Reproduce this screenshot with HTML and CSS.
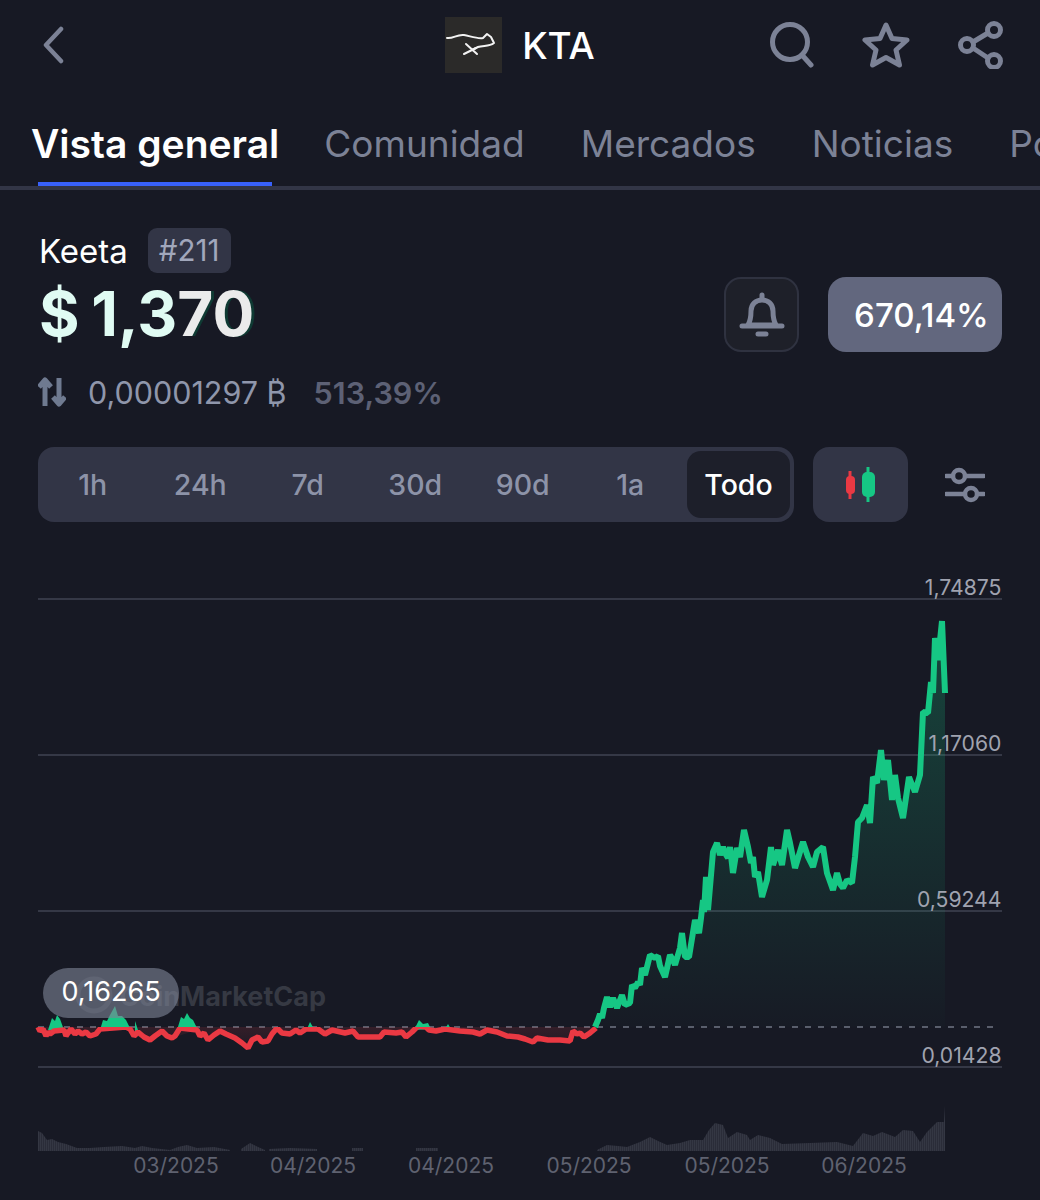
FILE: index.html
```html
<!DOCTYPE html>
<html lang="es">
  <head>
    <meta charset="utf-8">
    <title>KTA</title>
    <link rel="stylesheet" href="styles.css">
  </head>
  <body>
    <header class="topBar">
      <svg class="backIcon" width="26" height="38" viewBox="0 0 26 38"><path d="M21 3 L6 19 L21 35"/></svg>
      <div class="coinTitle">
        <svg class="coinLogo" width="57" height="56" viewBox="0 0 57 56">
          <path d="M2 21 C8 22 12 17 19 18 C25 19 32 22 38 21 L42 17 L46 20 L49 26 C44 30 38 28 33 30 L27 33"/>
          <path d="M21 27 L32 37 M19 37 L31 31"/>
        </svg>
        <span>KTA</span>
      </div>
      <div class="topIcons">
        <svg width="44" height="46" viewBox="0 0 44 46"><circle cx="20" cy="20" r="17.5"/><path d="M32 33 L41 43"/></svg>
        <svg width="48" height="48" viewBox="0 0 48 48"><path d="M24 4 L30 17.5 L45 19 L34 29 L37.500 44 L24 36.500 L10.500 44 L14 29 L3 19 L18 17.500 Z"/></svg>
        <svg width="46" height="48" viewBox="0 0 46 48"><circle cx="36" cy="9" r="6.500"/><circle cx="9" cy="24" r="6.500"/><circle cx="36" cy="40" r="6.500"/><path d="M30 12 L15 21 M15 27 L30 37"/></svg>
      </div>
    </header>

    <nav class="tabs">
      <a class="tab active">Vista general</a>
      <a class="tab">Comunidad</a>
      <a class="tab">Mercados</a>
      <a class="tab">Noticias</a>
      <a class="tab">Portfolio</a>
    </nav>

    <section class="priceBlock">
      <div class="priceLeft">
        <div class="nameRow">
          <span class="coinName">Keeta</span>
          <span class="rank">#211</span>
        </div>
        <div class="price">$ 1,3<span class="priceGhost">70</span></div>
      </div>
      <div class="priceRight">
        <button class="bellBtn">
          <svg width="46" height="46" viewBox="0 0 46 46">
            <path d="M23 3 V7 M9 33 C12 28 12 24 12 19 C12 12 17 8 23 8 C29 8 34 12 34 19 C34 24 34 28 37 33 Z"/>
            <path d="M3 34 H43 M19 42 H27"/>
          </svg>
        </button>
        <button class="changeBtn">670,14%</button>
      </div>
    </section>

    <div class="btcRow">
      <svg width="28" height="30" viewBox="0 0 28 30"><path d="M7 29 V6 M1 10 L7 3 L13 10 M21 1 V24 M15 20 L21 27 L27 20"/></svg>
      <span class="btcValue">0,00001297 ₿</span>
      <span class="btcChange">513,39%</span>
    </div>

    <div class="controls">
      <div class="ranges">
        <span>1h</span>
        <span>24h</span>
        <span>7d</span>
        <span>30d</span>
        <span>90d</span>
        <span>1a</span>
        <span class="current">Todo</span>
      </div>
      <button class="candleBtn">
        <svg width="32" height="36" viewBox="0 0 32 36">
          <path class="redCandle" d="M5 4 V32"/><rect class="redCandle" x="1" y="9" width="9" height="18" rx="4"/>
          <path class="greenCandle" d="M23 0 V35"/><rect class="greenCandle" x="17" y="5" width="13" height="25" rx="5"/>
        </svg>
      </button>
      <svg class="filterIcon" width="40" height="36" viewBox="0 0 40 36">
        <circle cx="14" cy="9" r="6"/><circle cx="26" cy="27" r="6"/>
        <path d="M1 9 H6 M22 9 H39 M1 27 H18 M34 27 H39"/>
      </svg>
    </div>

    <svg class="chart" width="1040" height="630" viewBox="0 570 1040 630">
      <defs>
        <linearGradient id="greenFade" gradientUnits="userSpaceOnUse" x1="0" y1="650" x2="0" y2="1027">
          <stop offset="0" stop-color="#16c784" stop-opacity=".24"/>
          <stop offset="1" stop-color="#16c784" stop-opacity=".01"/>
        </linearGradient>
        <linearGradient id="redFade" gradientUnits="userSpaceOnUse" x1="0" y1="1027" x2="0" y2="1048">
          <stop offset="0" stop-color="#ea3943" stop-opacity=".14"/>
          <stop offset="1" stop-color="#ea3943" stop-opacity=".03"/>
        </linearGradient>
        <pattern id="volBars" width="2" height="4" patternUnits="userSpaceOnUse">
          <rect width="2" height="4" fill="#2a2c38"/>
          <rect width="1" height="4" fill="#343743"/>
        </pattern>
        <clipPath id="belowBase"><rect x="0" y="1027" width="1040" height="100"/></clipPath>
      </defs>

      <g class="gridLines">
        <path d="M38 599 H1002 M38 755 H1002 M38 911 H1002 M38 1067 H1002"/>
      </g>
      <path class="baseLine" d="M38 1027 H994"/>

      <g class="watermark">
        <circle cx="94" cy="995" r="16"/>
        <text x="326" y="1006">CoinMarketCap</text>
      </g>

      <path class="volume" d="M38 1151 V1131 L42 1133 L47 1140 L52 1139 L58 1142 L66 1144 L77 1148 L90 1148 L104 1147 L122 1146 L135 1148 L142 1146 L152 1148 L170 1150 L178 1147 L187 1145 L197 1148 L214 1147 L230 1150 V1151 Z M241 1151 V1149 L250 1143 L258 1147 L265 1150 V1151 Z M269 1151 V1149 L290 1148 L317 1149 V1151 Z M352 1151 V1148 H363 V1151 Z M416 1151 V1148 H438 V1151 Z M597 1151 V1150 L607 1145 L618 1146 L627 1147 L640 1142 L650 1137 L658 1141 L667 1145 L680 1143 L690 1140 L703 1140 L709 1130 L715 1123 L723 1125 L728 1138 L737 1132 L747 1135 L750 1140 L758 1135 L770 1138 L782 1144 L810 1143 L837 1142 L853 1146 L863 1133 L873 1136 L882 1132 L895 1137 L903 1130 L913 1131 L920 1142 L927 1132 L937 1122 L944 1122 L945 1106 V1151 Z"/>

      <path class="areaGreen" d="M595 1027 L600 1014 L604 1008 L607 997 L610 1007 L613 998 L617 1008 L622 995 L625 1005 L630 1003 L632 985 L638 982 L642 968 L645 975 L650 955 L655 958 L660 966 L665 977 L670 955 L675 965 L682 933 L685 957 L689 957 L695 920 L699 933 L703 900 L706 877 L708 910 L713 852 L717 843 L720 855 L723 847 L728 858 L730 847 L733 873 L737 848 L740 857 L744 830 L748 847 L751 863 L753 857 L755 877 L758 872 L762 897 L767 880 L771 847 L773 865 L778 850 L782 865 L787 830 L790 843 L795 868 L803 842 L808 857 L813 867 L817 852 L823 847 L827 873 L833 890 L837 873 L843 888 L847 880 L852 883 L855 857 L858 822 L862 818 L867 805 L870 823 L873 777 L877 783 L881 750 L884 780 L888 760 L892 800 L895 775 L898 798 L903 818 L909 777 L915 792 L920 775 L923 712 L928 713 L931 682 L933 693 L935 638 L938 660 L942 621 L945 693 V1027 Z"/>
      <path class="areaRed" clip-path="url(#belowBase)" d="M38 1027 L42 1030 L46 1036 L50 1031 L64 1030 L68 1036 L74 1030 L82 1034 L92 1035 L100 1030 L130 1028 L134 1036 L150 1040 L162 1033 L175 1037 L197 1030 L210 1040 L222 1034 L235 1038 L248 1048 L258 1040 L266 1043 L277 1028 L290 1033 L306 1029 L330 1033 L353 1032 L360 1037 L380 1037 L385 1032 L404 1034 L407 1037 L415 1030 L440 1028 L473 1032 L487 1028 L507 1036 L533 1042 L540 1038 L570 1041 L573 1031 L583 1036 L595 1028 L595 1027 Z"/>

      <path class="humps" d="M48 1030 L52 1018 L55 1021 L57 1015 L60 1019 L64 1030 Z M100 1030 L103 1020 L107 1021 L110 1015 L115 1006 L118 1016 L122 1016 L126 1020 L131 1030 Z M177 1030 L181 1017 L184 1019 L187 1013 L190 1018 L193 1020 L198 1030 Z M135 1032 L135 1021 L138 1030 Z M307 1029 L310 1022 L314 1029 Z M414 1030 L419 1020 L423 1024 L428 1023 L431 1029 Z M445 1029 L448 1024 L451 1029 Z"/>

      <path class="priceLine lineGreen" d="M595 1027 L598 1020 L600 1014 L602 1018 L604 1008 L607 997 L610 1007 L613 998 L617 1008 L620 1000 L622 995 L625 1005 L630 1003 L632 985 L635 988 L638 982 L640 985 L642 968 L645 975 L650 955 L655 958 L658 956 L660 966 L665 977 L670 955 L673 960 L675 965 L680 948 L682 933 L685 957 L689 957 L695 920 L699 933 L701 918 L703 900 L704 912 L706 877 L708 910 L713 852 L717 843 L720 855 L723 847 L725 853 L728 858 L730 847 L733 873 L737 848 L740 857 L744 830 L748 847 L751 863 L753 857 L755 877 L758 872 L762 897 L767 880 L771 847 L773 865 L778 850 L782 865 L787 830 L790 843 L795 868 L803 842 L808 857 L813 867 L817 852 L823 847 L827 873 L833 890 L837 873 L840 884 L843 888 L847 880 L852 883 L855 857 L858 822 L862 818 L867 805 L870 823 L873 777 L877 783 L881 750 L884 780 L888 760 L892 800 L895 775 L898 798 L903 818 L909 777 L915 792 L920 775 L923 712 L928 713 L931 682 L933 693 L935 638 L938 660 L942 621 L945 693"/>
      <path class="priceLine lineRed" clip-path="url(#belowBase)" d="M38 1027 L40 1031 L43 1029 L46 1036 L48 1032 L50 1034 L54 1031 L64 1030 L66 1036 L68 1033 L71 1029 L75 1034 L78 1031 L82 1034 L86 1032 L90 1036 L96 1034 L100 1029 L126 1027 L130 1029 L134 1036 L138 1032 L144 1037 L150 1040 L155 1036 L162 1031 L167 1036 L172 1038 L175 1036 L180 1028 L197 1030 L200 1036 L204 1033 L208 1040 L214 1035 L220 1031 L226 1034 L235 1038 L242 1043 L248 1048 L252 1040 L258 1037 L262 1042 L268 1041 L272 1034 L277 1028 L282 1033 L290 1034 L296 1030 L300 1033 L306 1029 L318 1029 L325 1034 L332 1030 L345 1033 L353 1031 L358 1037 L380 1037 L384 1032 L396 1033 L402 1032 L406 1037 L412 1032 L418 1026 L426 1027 L429 1030 L436 1031 L445 1029 L460 1031 L473 1032 L480 1034 L487 1030 L497 1032 L507 1036 L518 1037 L525 1039 L533 1042 L537 1038 L548 1040 L560 1040 L570 1041 L573 1031 L577 1034 L580 1033 L584 1037 L590 1033 L596 1028"/>

      <g class="axisValues">
        <text x="1001.500" y="595">1,74875</text>
        <text x="1001.500" y="751">1,17060</text>
        <text x="1001.500" y="907">0,59244</text>
        <text x="1001.500" y="1063">0,01428</text>
      </g>
      <g class="axisDates">
        <text x="176" y="1173">03/2025</text>
        <text x="313" y="1173">04/2025</text>
        <text x="451" y="1173">04/2025</text>
        <text x="589" y="1173">05/2025</text>
        <text x="727" y="1173">05/2025</text>
        <text x="864" y="1173">06/2025</text>
      </g>

      <rect class="pricePill" x="43" y="968" width="136" height="50" rx="25"/>
      <text class="pillText" x="111" y="1001">0,16265</text>
    </svg>
  </body>
</html>
```

FILE: styles.css
```css
html {
  font-family: Inter, "Liberation Sans", sans-serif;
}

body {
  width: 1040px;
  height: 1200px;
  margin: 0;
  overflow: hidden;
  background-color: #171924;
  color: #fff;
}

button {
  font-family: inherit;
  padding: 0;
}

svg {
  display: block;
}

/* top bar */
.topBar {
  display: grid;
  grid-template-columns: 1fr auto 1fr;
  align-items: center;
  height: 90px;
  padding: 0 36px;
}

.backIcon {
  margin-left: 4px;
}

.backIcon path {
  fill: none;
  stroke: #7c8296;
  stroke-width: 4.5;
  stroke-linecap: round;
  stroke-linejoin: round;
}

.coinTitle {
  display: flex;
  align-items: center;
  gap: 20px;
  font-size: 37px;
  font-weight: 500;
}

.coinLogo {
  background-color: #2b2a29;
}

.coinLogo path {
  fill: none;
  stroke: #f2f2f2;
  stroke-width: 2;
  stroke-linecap: round;
  stroke-linejoin: round;
}

.topIcons {
  display: flex;
  justify-content: flex-end;
  align-items: center;
  gap: 48px;
}

.topIcons svg * {
  fill: none;
  stroke: #7c8296;
  stroke-width: 5;
  stroke-linecap: round;
  stroke-linejoin: round;
}

/* tabs */
.tabs {
  display: flex;
  gap: 56px;
  height: 100px;
  padding-left: 31px;
  border-bottom: 4px solid #323546;
  box-sizing: border-box;
  overflow: hidden;
  white-space: nowrap;
  font-size: 37px;
  line-height: 108px;
  color: #7c8296;
}

.tab {
  position: relative;
}

.tab.active {
  margin-right: -11px;
  font-size: 39px;
  font-weight: 600;
  color: #fff;
}

.tab.active::after {
  content: "";
  position: absolute;
  left: 7px;
  right: 7px;
  bottom: 0;
  height: 4px;
  background-color: #3861fb;
}

/* price */
.priceBlock {
  display: flex;
  justify-content: space-between;
  align-items: flex-end;
  padding: 38px 38px 0 39px;
}

.nameRow {
  display: flex;
  align-items: center;
  gap: 20px;
}

.coinName {
  font-size: 33px;
  font-weight: 400;
}

.rank {
  padding: 0 11px;
  height: 45px;
  line-height: 45px;
  border-radius: 9px;
  background-color: #323546;
  color: #a1a7bb;
  font-size: 29.500px;
}

.price {
  margin-top: 4px;
  height: 74px;
  font-size: 62px;
  line-height: 74px;
  font-weight: 700;
  word-spacing: -3px;
  color: #e0fbf3;
}

.priceGhost {
  color: #ebebeb;
  text-shadow: 3px 0 0 #0f3a33;
}

.priceRight {
  display: flex;
  gap: 29px;
  margin-bottom: -1px;
}

.bellBtn {
  display: flex;
  align-items: center;
  justify-content: center;
  width: 75px;
  height: 75px;
  border: 2px solid #2f3240;
  border-radius: 17px;
  background-color: #1e2029;
}

.bellBtn svg * {
  fill: none;
  stroke: #7c8296;
  stroke-width: 5;
  stroke-linecap: round;
  stroke-linejoin: round;
}

.changeBtn {
  width: 174px;
  height: 75px;
  padding-left: 13px;
  border: 0;
  border-radius: 18px;
  background-color: #62677e;
  color: #fff;
  font-size: 33px;
  font-weight: 500;
}

.btcRow {
  display: flex;
  align-items: center;
  height: 40px;
  margin-top: 21px;
  padding-left: 38px;
  font-size: 30.500px;
}

.btcRow svg {
  margin-right: 22px;
}

.btcRow path {
  fill: none;
  stroke: #6f7a90;
  stroke-width: 5;
  stroke-linejoin: round;
}

.btcValue {
  color: #8f96ab;
}

.btcChange {
  margin-left: 27px;
  color: #5d6175;
  font-weight: 600;
}

/* range buttons */
.controls {
  display: flex;
  align-items: center;
  margin-top: 35px;
  padding-left: 38px;
}

.ranges {
  display: grid;
  grid-template-columns: repeat(6, 107.500px) 106px;
  width: 756px;
  height: 75px;
  padding: 4px 4px 4px 1px;
  box-sizing: border-box;
  border-radius: 16px;
  background-color: #323546;
  font-size: 28.500px;
  font-weight: 500;
  color: #8d93a8;
}

.ranges span {
  display: flex;
  align-items: center;
  justify-content: center;
}

.ranges .current {
  margin-left: 3px;
  border-radius: 14px;
  background-color: #1d1f2a;
  color: #fff;
}

.candleBtn {
  display: flex;
  align-items: center;
  justify-content: center;
  width: 95px;
  height: 75px;
  margin-left: 19px;
  border: 0;
  border-radius: 16px;
  background-color: #323546;
}

.redCandle {
  fill: #ea3943;
  stroke: #ea3943;
  stroke-width: 3;
}

.greenCandle {
  fill: #16c784;
  stroke: #16c784;
  stroke-width: 3;
}

.redCandle[x],
.greenCandle[x] {
  stroke: none;
}

.filterIcon {
  margin-left: 37px;
}

.filterIcon * {
  fill: none;
  stroke: #7c8296;
  stroke-width: 4.500;
  stroke-linecap: round;
}

/* chart */
.chart {
  margin-top: 48px;
}

.gridLines path {
  fill: none;
  stroke: #353846;
  stroke-width: 2;
}

.baseLine {
  fill: none;
  stroke: #5a5e6c;
  stroke-width: 2;
  stroke-dasharray: 6 7;
}

.watermark circle {
  fill: none;
  stroke: #30333e;
  stroke-width: 5;
}

.watermark text {
  fill: #363943;
  font-size: 27px;
  font-weight: 700;
  text-anchor: end;
}

.volume {
  fill: url(#volBars);
}

.areaGreen {
  fill: url(#greenFade);
}

.areaRed {
  fill: url(#redFade);
}

.humps {
  fill: #16c784;
}

.priceLine {
  fill: none;
  stroke-width: 5.500;
  stroke-linejoin: bevel;
}

.lineGreen {
  stroke: #16c784;
  stroke-width: 6;
}

.lineRed {
  stroke: #ea3943;
}

.axisValues text {
  fill: #a0a3b0;
  font-size: 21.200px;
  text-anchor: end;
}

.axisDates text {
  fill: #5f6270;
  font-size: 21px;
  text-anchor: middle;
}

.pricePill {
  fill: #7d8295;
  fill-opacity: .62;
}

.pillText {
  fill: #fff;
  font-size: 27px;
  text-anchor: middle;
}
```
